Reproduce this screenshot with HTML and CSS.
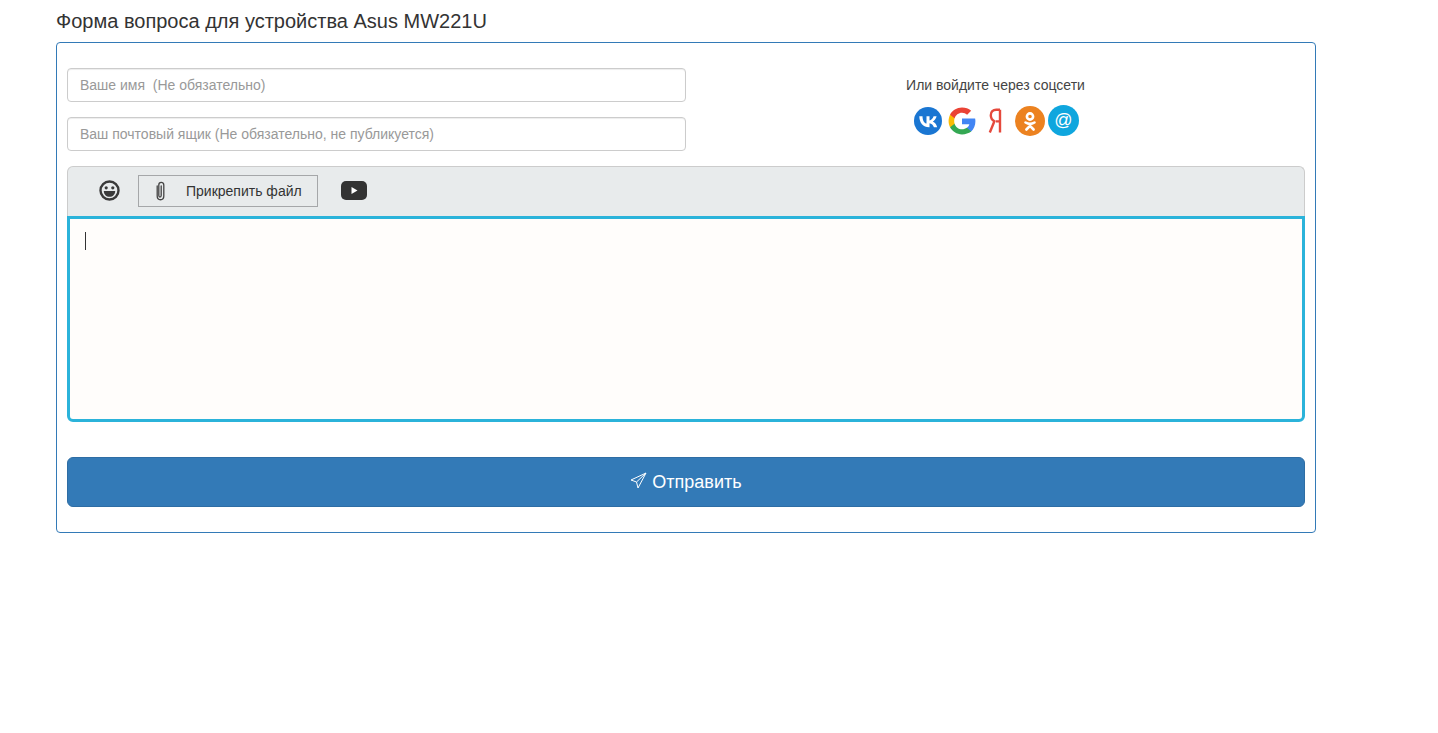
FILE: index.html
```html
<!DOCTYPE html>
<html lang="ru">
<head>
<meta charset="utf-8">
<title>Форма вопроса</title>
<link rel="stylesheet" href="styles.css">
</head>
<body>
<main class="page">
  <h1 class="title">Форма вопроса для устройства Asus MW221U</h1>
  <form class="panel">
    <div class="top">
      <div class="fields">
        <input class="field" type="text" placeholder="Ваше имя  (Не обязательно)">
        <input class="field" type="text" placeholder="Ваш почтовый ящик (Не обязательно, не публикуется)">
      </div>
      <div class="social">
        <p class="social-label">Или войдите через соцсети</p>
        <div class="social-icons">
          <svg class="ic-vk" width="28" height="28" viewBox="0 0 28 28"><circle cx="14" cy="14" r="14" fill="#1a76d2"/><path d="M15.200 20.200C9 20.200 5.500 15.900 5.300 9.200h3.200c.1 4.900 2.300 7 4 7.400V9.200h3v4.200c1.700-.2 3.500-2.100 4.100-4.200h3c-.5 2.600-2.400 4.500-3.800 5.300 1.400.7 3.600 2.400 4.400 5.700h-3.300c-.7-2.100-2.300-3.700-4.400-3.900v3.900z" fill="#fff"/></svg>
          <svg class="ic-g" width="28" height="28" viewBox="0 0 48 48"><path fill="#4285f4" d="M47 24.500c0-1.700-.1-3.300-.5-5H24v10h12.600c-.5 2.500-2 4.500-4.200 6v6.500h7.400C44.200 38 47 31.800 47 24.500z"/><path fill="#34a853" d="M24 47c6.200 0 11.400-2 15.800-5l-7.400-6.500c-2 1.400-5.300 2.700-8.400 2.700-6 0-10.900-4-12.700-9.500H3.500v6.200C7.300 41.900 15 47 24 47z"/><path fill="#fbbc05" d="M11.300 28.700c-.5-1.400-.7-3-.7-4.700s.3-3.300.7-4.700v-6.200H3.500C2 16.700 1 20.200 1 24s.9 7.300 2.500 10.900z"/><path fill="#ea4335" d="M24 9.800c3.400 0 6.400 1.200 8.800 3.500l6.900-6.800C35.400 3.100 30.200 1 24 1 15 1 7.300 6.100 3.500 13.100l7.800 6.200C13.100 14 18 9.800 24 9.800z"/></svg>
          <svg class="ic-ya" width="14" height="26" viewBox="0 0 14 26"><path d="M12 1.800H8.200C5 1.800 2.800 3.800 2.800 7.200c0 3 1.200 4.700 3.600 6.100L1.800 24.500M12 1.800v22.700M12 13.400H8" fill="none" stroke="#e5493c" stroke-width="2.400"/></svg>
          <svg class="ic-ok" width="30" height="30" viewBox="0 0 30 30"><circle cx="15" cy="15" r="15" fill="#ec8220"/><circle cx="15" cy="10.500" r="3.100" fill="none" stroke="#fff" stroke-width="2.600"/><path d="M10.500 16.500c2.800 1.700 6.200 1.700 9 0M15 18v2M15 19.800l-3.600 3.700M15 19.800l3.600 3.700" fill="none" stroke="#fff" stroke-width="2.600" stroke-linecap="round"/></svg>
          <svg class="ic-at" width="31" height="31" viewBox="0 0 31 31"><circle cx="15.500" cy="15.500" r="15.500" fill="#0fa6de"/><text class="at-glyph" x="15.500" y="21" text-anchor="middle">@</text></svg>
        </div>
      </div>
    </div>
    <div class="editor">
      <div class="toolbar">
        <svg class="tool-smile" width="21" height="21" viewBox="0 0 21 21"><circle cx="10.500" cy="10.500" r="9" fill="none" stroke="#3a3a3a" stroke-width="2.400"/><circle cx="7.200" cy="7.800" r="1.600" fill="#3a3a3a"/><circle cx="13.800" cy="7.800" r="1.600" fill="#3a3a3a"/><path d="M4.800 11h11.400c0 3.500-2.500 5.800-5.700 5.800S4.800 14.500 4.800 11z" fill="#3a3a3a"/></svg>
        <button class="attach" type="button">
          <svg width="12" height="20" viewBox="0 0 12 20"><path d="M3.200 5v10c0 5 6.600 5 6.600 0V4C9.800.5 4.800.500 4.800 4v10.500c0 2 2.400 2 2.400 0V5" fill="none" stroke="#444" stroke-width="1.300" stroke-linecap="round"/></svg>
          <span>Прикрепить файл</span>
        </button>
        <svg class="tool-yt" width="26" height="19" viewBox="0 0 26 19"><rect width="26" height="19" rx="5" fill="#333"/><path d="M10.500 6l6 3.500-6 3.500z" fill="#fff"/></svg>
      </div>
      <div class="text-area"><span class="caret"></span></div>
    </div>
    <button class="send" type="button">
      <svg width="17" height="17" viewBox="0 0 17 17"><path d="M16 1L1 8l5.500 2L8 16zM16 1L6.500 10" fill="none" stroke="#fff" stroke-width="1" stroke-linejoin="round"/></svg>
      <span>Отправить</span>
    </button>
  </form>
</main>
</body>
</html>
```
FILE: styles.css
```css
* { box-sizing: border-box; }
html, body { margin: 0; padding: 0; background: #fff; }
body {
  font-family: "Liberation Sans", Arial, sans-serif;
  font-size: 14px;
  color: #333;
}
.page { width: 1260px; margin-left: 56px; }
.title {
  margin: 0;
  height: 42px;
  padding-top: 11px;
  font-size: 20px;
  line-height: 20px;
  font-weight: 400;
  color: #333;
}
.panel {
  height: 491px;
  border: 1px solid #337ab7;
  border-radius: 4px;
  padding: 25px 10px 0;
}
.top { display: flex; height: 83px; }
.fields { width: 619px; display: flex; flex-direction: column; gap: 15px; }
.field {
  display: block;
  width: 100%;
  height: 34px;
  padding: 6px 12px;
  font: 14px/20px "Liberation Sans", Arial, sans-serif;
  color: #555;
  background: #fff;
  border: 1px solid #ccc;
  border-radius: 4px;
  box-shadow: inset 0 1px 1px rgba(0,0,0,.075);
}
.field::placeholder { color: #999; opacity: 1; }
.social { flex: 1; display: flex; flex-direction: column; align-items: center; padding-top: 7px; }
.social-label { margin: 0; font-size: 14px; line-height: 20px; color: #444; }
.social-icons { display: flex; align-items: center; height: 31px; margin: 10px 0 0 2px; }
.ic-g { margin-left: 6px; }
.ic-ya { margin-left: 12px; }
.ic-ok { margin-left: 13px; }
.ic-at { margin-left: 3px; }
.at-glyph { font: 18px "Liberation Sans", Arial, sans-serif; fill: #fff; }
.editor { margin-top: 15px; }
.toolbar {
  height: 50px;
  display: flex;
  align-items: center;
  background: #e8ebec;
  border: 1px solid #ccc;
  border-bottom: 0;
  border-radius: 6px 6px 0 0;
  padding: 0 0 2px 31px;
}
.attach {
  display: flex;
  align-items: center;
  width: 180px;
  height: 32px;
  margin-left: 18px;
  padding: 0 0 0 15px;
  background: transparent;
  border: 1px solid #a5a7a9;
  font: 14px "Liberation Sans", Arial, sans-serif;
  color: #333;
}
.attach span { margin-left: 20px; }
.tool-yt { margin-left: 23px; }
.text-area {
  height: 206px;
  padding: 13px 15px;
  background: #fffdfb;
  border: 3px solid #2bb3da;
  border-radius: 0 0 6px 6px;
}
.caret { display: block; width: 1px; height: 18px; background: #333; }
.send {
  display: flex;
  align-items: center;
  justify-content: center;
  gap: 5px;
  width: 100%;
  height: 50px;
  margin-top: 35px;
  background: #337ab7;
  border: 1px solid #2e6da4;
  border-radius: 6px;
  color: #fff;
  font: 18px "Liberation Sans", Arial, sans-serif;
}
.send svg { margin-top: -3px; }
```
